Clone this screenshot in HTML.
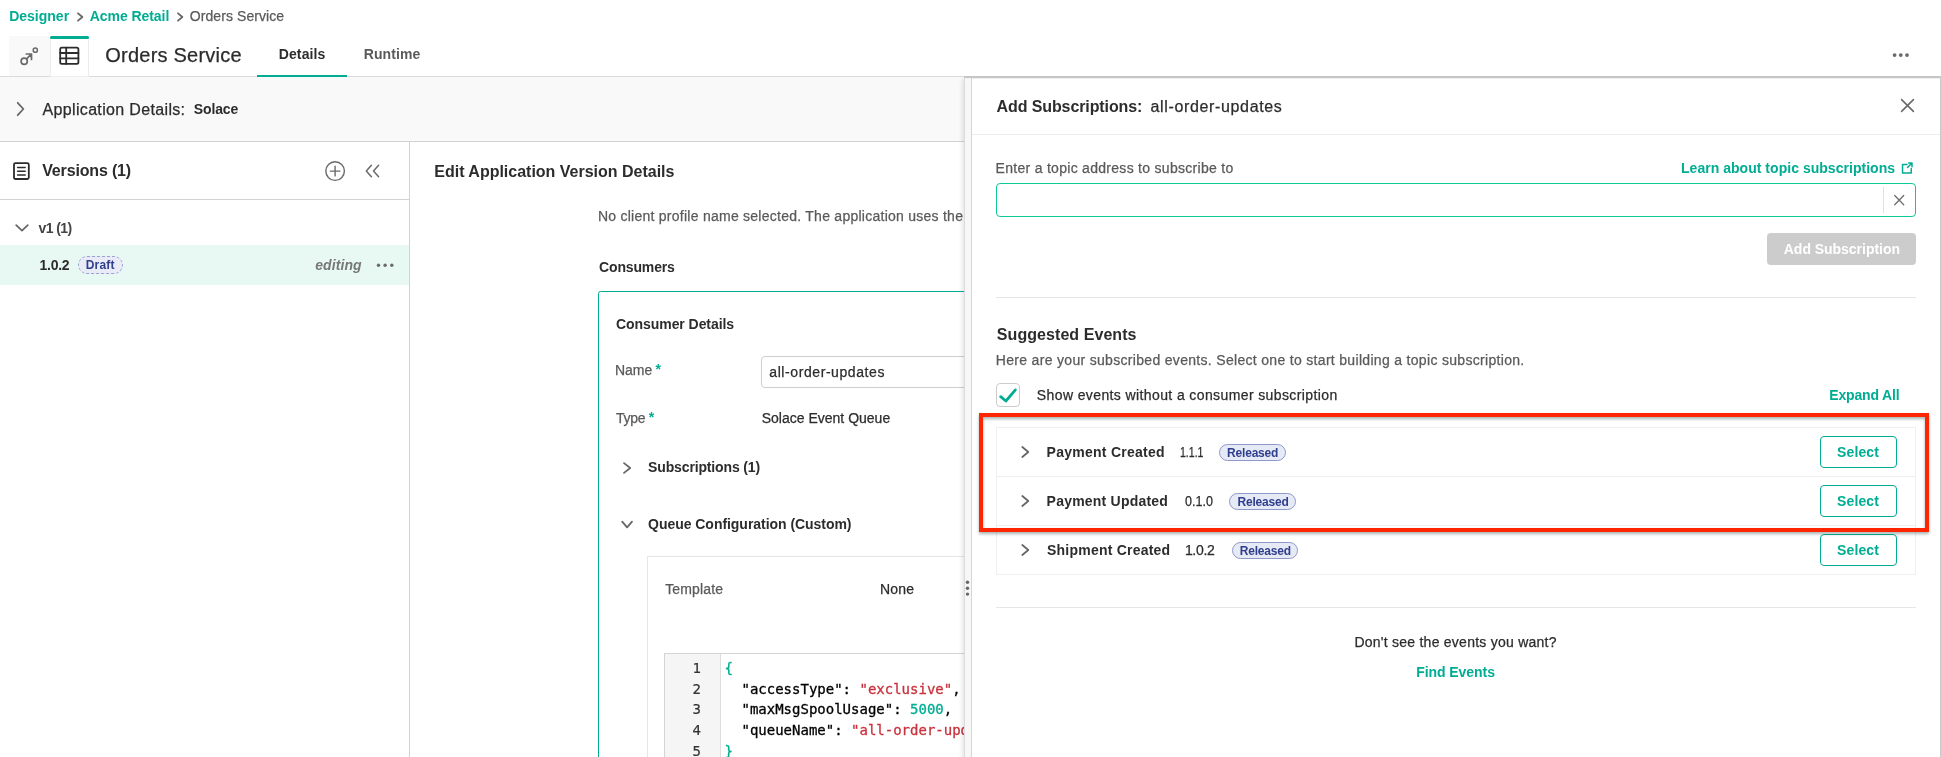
<!DOCTYPE html>
<html lang="en">
<head>
<meta charset="utf-8">
<title>Orders Service - Designer</title>
<style>
html,body{margin:0;padding:0;background:#fff;}
body{width:1941px;height:757px;overflow:hidden;position:relative;font-family:'Liberation Sans',sans-serif;}
#app{position:absolute;left:0;top:0;width:1941px;height:757px;overflow:hidden;background:#fff;will-change:transform;}
.t{position:absolute;line-height:1;white-space:pre;font-family:'Liberation Sans',sans-serif;}
.abs,.box,svg.ic{position:absolute;}
.box{box-sizing:border-box;}
svg.ic{overflow:visible;fill:none;stroke-linecap:round;stroke-linejoin:round;}
nav,header,section,aside,main{position:absolute;left:0;top:0;width:0;height:0;}
main{width:964px;height:757px;overflow:hidden;}
.badge{position:absolute;box-sizing:border-box;border:1px solid #8f99c9;background:#e6e9f6;border-radius:9px;}
.btn-o{position:absolute;box-sizing:border-box;border:1px solid #00ad93;border-radius:4px;background:#fff;}
.code{-webkit-text-stroke:0.3px currentColor;position:absolute;font-family:'DejaVu Sans Mono','Liberation Mono',monospace;font-size:14px;line-height:1;white-space:pre;color:#000;}
.code .s{color:#c9333d;-webkit-text-stroke:0.3px #c9333d;}
.code .n,.code .b{color:#00ad93;-webkit-text-stroke:0.3px #00ad93;}
.ln{-webkit-text-stroke:0.2px currentColor;position:absolute;font-family:'DejaVu Sans Mono','Liberation Mono',monospace;font-size:14px;line-height:1;color:#333;width:30px;text-align:right;}
</style>
</head>
<body>
<div id="app">

<!-- breadcrumb -->
<nav>
  <span class="t" style="left:9.2px;top:9.2px;font-size:14px;color:#00ad93;letter-spacing:0.0px;font-weight:700;">Designer</span>
  <svg class="ic" style="left:76px;top:12px" width="9" height="10" stroke="#666" stroke-width="1.75"><path d="M2 1.3 L6.4 5 L2 8.7"/></svg>
  <span class="t" style="left:89.7px;top:9.2px;font-size:14px;color:#00ad93;letter-spacing:-0.05px;font-weight:700;">Acme Retail</span>
  <svg class="ic" style="left:175.7px;top:12px" width="9" height="10" stroke="#666" stroke-width="1.75"><path d="M2 1.3 L6.4 5 L2 8.7"/></svg>
  <span class="t" style="left:189.7px;top:9.2px;font-size:14px;color:#5a5a5a;letter-spacing:0.085px;-webkit-text-stroke:0.25px currentColor;">Orders Service</span>
</nav>

<!-- page header -->
<header>
  <div class="box" style="left:9px;top:36px;width:41px;height:40px;background:#f9f9f9;"></div>
  <div class="box" style="left:50px;top:36px;width:39px;height:41px;background:#fff;border-left:1px solid #ececec;border-right:1px solid #ececec;"></div>
  <div class="box" style="left:50px;top:35.7px;width:38.5px;height:3px;background:#00ad93;border-radius:1.5px;"></div>
  <!-- graph icon -->
  <svg class="ic" style="left:17px;top:44px" width="24" height="24" stroke="#6a6a6a" stroke-width="1.7">
    <circle cx="7.2" cy="17.3" r="3.1"/><circle cx="18.3" cy="6.2" r="2.1" stroke-width="1.5"/>
    <path d="M9.6 14.9 L14.3 10.2 M9.3 10 L14.5 10 L14.5 15.4"/>
  </svg>
  <!-- table icon -->
  <svg class="ic" style="left:58px;top:44px" width="24" height="24" stroke="#2c2c2c" stroke-width="1.8">
    <rect x="2.2" y="3.6" width="18.2" height="16.2" rx="1.6"/>
    <path d="M8.2 3.6 V19.8 M2.2 9 H20.4 M2.2 14.3 H20.4"/>
  </svg>
  <span class="t" style="left:105.3px;top:45.2px;font-size:20px;color:#2c2c2c;letter-spacing:0.223px;-webkit-text-stroke:0.25px currentColor;">Orders Service</span>
  <span class="t" style="left:278.7px;top:47.2px;font-size:14px;color:#2c2c2c;letter-spacing:0.133px;font-weight:700;">Details</span>
  <span class="t" style="left:363.7px;top:47.2px;font-size:14px;color:#5a5a5a;letter-spacing:0.116px;font-weight:700;">Runtime</span>
  <div class="abs" style="left:0;top:76px;width:1941px;height:1px;background:#dadada;"></div>
  <div class="abs" style="left:50px;top:76px;width:39px;height:1px;background:#eeeeee;"></div>
  <div class="abs" style="left:257px;top:75px;width:90px;height:2px;background:#00ad93;"></div>
  <svg class="ic" style="left:1890px;top:50px" width="22" height="10" fill="#6a6a6a" stroke="none"><circle cx="4.6" cy="5.1" r="1.9" fill="#6a6a6a"/><circle cx="10.8" cy="5.1" r="1.9" fill="#6a6a6a"/><circle cx="17" cy="5.1" r="1.9" fill="#6a6a6a"/></svg>
</header>

<!-- application details bar -->
<section>
  <div class="box" style="left:0;top:77px;width:1941px;height:65px;background:#f9f9f9;border-bottom:1px solid #d2d2d2;"></div>
  <svg class="ic" style="left:14px;top:100px" width="14" height="18" stroke="#666" stroke-width="1.75"><path d="M3.7 2.8 L9.4 9 L3.7 15.2"/></svg>
  <span class="t" style="left:42.5px;top:102.2px;font-size:16px;color:#2c2c2c;letter-spacing:0.342px;-webkit-text-stroke:0.25px currentColor;">Application Details:</span>
  <span class="t" style="left:193.7px;top:102.2px;font-size:14px;color:#2c2c2c;letter-spacing:-0.1px;font-weight:700;">Solace</span>
</section>

<!-- versions sidebar -->
<aside>
  <div class="abs" style="left:409px;top:142px;width:1px;height:615px;background:#d2d2d2;"></div>
  <div class="abs" style="left:0;top:199px;width:409px;height:1px;background:#d2d2d2;"></div>
  <svg class="ic" style="left:11px;top:160px" width="22" height="22" stroke="#2c2c2c" stroke-width="1.8">
    <rect x="3" y="3.2" width="14.8" height="15.8" rx="1.5"/>
    <path d="M6.6 7.6 H14.2 M6.6 11.3 H14.2 M6.6 15 H14.2" stroke-width="1.5"/>
  </svg>
  <span class="t" style="left:42.2px;top:163.2px;font-size:16px;color:#2c2c2c;letter-spacing:-0.155px;font-weight:700;">Versions (1)</span>
  <svg class="ic" style="left:324px;top:160px" width="22" height="22" stroke="#6a6a6a" stroke-width="1.4">
    <circle cx="11.1" cy="11.1" r="9.3"/><path d="M11.1 6.3 V15.9 M6.3 11.1 H15.9"/>
  </svg>
  <svg class="ic" style="left:363px;top:162px" width="20" height="18" stroke="#6a6a6a" stroke-width="1.5">
    <path d="M8.4 3.2 L3.3 9 L8.4 14.8 M15.6 3.2 L10.5 9 L15.6 14.8"/>
  </svg>
  <svg class="ic" style="left:13px;top:221px" width="18" height="14" stroke="#666" stroke-width="1.75"><path d="M3.2 4.2 L9 9.6 L14.8 4.2"/></svg>
  <span class="t" style="left:38.5px;top:221.2px;font-size:14px;color:#444;letter-spacing:-0.6px;font-weight:700;">v1 (1)</span>
  <div class="abs" style="left:0;top:245px;width:409px;height:39.6px;background:#e8f8f3;"></div>
  <span class="t" style="left:39.5px;top:258.2px;font-size:14px;color:#2c2c2c;letter-spacing:-0.275px;font-weight:700;">1.0.2</span>
  <div class="badge" style="left:78px;top:256.3px;width:44.8px;height:17.6px;border:1px dashed #9aa3cf;background:#e9ebf7;"></div>
  <span class="t" style="left:85.7px;top:259.2px;font-size:12px;color:#2f3f8c;letter-spacing:0.225px;font-weight:700;">Draft</span>
  <span class="t" style="left:315.2px;top:258.2px;font-size:14px;color:#787878;letter-spacing:0.083px;font-weight:700;font-style:italic;">editing</span>
  <svg class="ic" style="left:374px;top:261px" width="22" height="9" stroke="none"><circle cx="4.5" cy="4.3" r="1.7" fill="#6a6a6a"/><circle cx="11.1" cy="4.3" r="1.7" fill="#6a6a6a"/><circle cx="17.8" cy="4.3" r="1.7" fill="#6a6a6a"/></svg>
</aside>

<!-- main edit form -->
<main>
  <span class="t" style="left:434.3px;top:164.2px;font-size:16px;color:#2c2c2c;letter-spacing:-0.007px;font-weight:700;">Edit Application Version Details</span>
  <span class="t" style="left:597.9px;top:209.2px;font-size:14px;color:#5a5a5a;letter-spacing:0.256px;-webkit-text-stroke:0.25px currentColor;">No client profile name selected. The application uses the</span>
  <span class="t" style="left:599.0px;top:260.2px;font-size:14px;color:#2c2c2c;letter-spacing:-0.139px;font-weight:700;">Consumers</span>
  <div class="box" style="left:598px;top:291px;width:900px;height:600px;border:1px solid #00ad93;border-radius:2.5px;"></div>
  <span class="t" style="left:616.0px;top:317.2px;font-size:14px;color:#2c2c2c;letter-spacing:-0.06px;font-weight:700;">Consumer Details</span>
  <span class="t" style="left:615.0px;top:363.2px;font-size:14px;color:#5a5a5a;letter-spacing:-0.033px;-webkit-text-stroke:0.25px currentColor;">Name</span>
  <span class="t" style="left:655.6px;top:361.5px;font-size:14px;font-weight:700;color:#00ad93;">*</span>
  <div class="box" style="left:761px;top:356px;width:500px;height:32px;border:1px solid #cfcfcf;border-radius:4px;background:#fff;"></div>
  <span class="t" style="left:769.3px;top:365.2px;font-size:14px;color:#2c2c2c;letter-spacing:0.581px;-webkit-text-stroke:0.25px currentColor;">all-order-updates</span>
  <span class="t" style="left:616.0px;top:411.2px;font-size:14px;color:#5a5a5a;letter-spacing:-0.234px;-webkit-text-stroke:0.25px currentColor;">Type</span>
  <span class="t" style="left:648.8px;top:409.5px;font-size:14px;font-weight:700;color:#00ad93;">*</span>
  <span class="t" style="left:761.7px;top:411.2px;font-size:14px;color:#2c2c2c;letter-spacing:0.005px;-webkit-text-stroke:0.25px currentColor;">Solace Event Queue</span>
  <svg class="ic" style="left:620px;top:460px" width="14" height="16" stroke="#666" stroke-width="1.75"><path d="M4 3.1 L10.2 8 L4 12.9"/></svg>
  <span class="t" style="left:648.1px;top:460.2px;font-size:14px;color:#2c2c2c;letter-spacing:-0.143px;font-weight:700;">Subscriptions (1)</span>
  <svg class="ic" style="left:619px;top:518px" width="16" height="14" stroke="#666" stroke-width="1.75"><path d="M3.2 3.6 L8.1 9.4 L13 3.6"/></svg>
  <span class="t" style="left:648.1px;top:517.2px;font-size:14px;color:#2c2c2c;letter-spacing:-0.041px;font-weight:700;">Queue Configuration (Custom)</span>
  <div class="box" style="left:647px;top:556px;width:700px;height:400px;border:1px solid #e6e6e6;"></div>
  <span class="t" style="left:665.2px;top:582.2px;font-size:14px;color:#5a5a5a;letter-spacing:0.143px;-webkit-text-stroke:0.25px currentColor;">Template</span>
  <span class="t" style="left:880.1px;top:582.2px;font-size:14px;color:#2c2c2c;letter-spacing:0.133px;-webkit-text-stroke:0.25px currentColor;">None</span>
  <div class="box" style="left:664px;top:653px;width:600px;height:300px;border:1px solid #d4d4d4;background:#fff;"></div>
  <div class="box" style="left:665px;top:654px;width:56px;height:300px;background:#f5f5f5;border-right:1px solid #dddddd;"></div>
  <span class="ln" style="top:660.7px;left:671px;">1</span>
  <span class="ln" style="top:681.5px;left:671px;">2</span>
  <span class="ln" style="top:702.2px;left:671px;">3</span>
  <span class="ln" style="top:723px;left:671px;">4</span>
  <span class="ln" style="top:743.7px;left:671px;">5</span>
  <span class="code" style="top:660.7px;left:724.6px;"><span class="b">{</span></span>
  <span class="code" style="top:681.5px;left:724.6px;">  "accessType": <span class="s">"exclusive"</span>,</span>
  <span class="code" style="top:702.2px;left:724.6px;">  "maxMsgSpoolUsage": <span class="n">5000</span>,</span>
  <span class="code" style="top:723px;left:724.6px;">  "queueName": <span class="s">"all-order-updates"</span></span>
  <span class="code" style="top:743.7px;left:724.6px;"><span class="b">}</span></span>
</main>


<!-- add subscriptions side panel -->
<aside>
  <div class="box" style="left:963.6px;top:79px;width:977px;height:690px;background:#fff;box-shadow:-2px 0 4px rgba(0,0,0,0.10);"></div>
  <div class="box" style="left:963.6px;top:77px;width:8.4px;height:690px;background:#f7f7f7;border-left:1px solid #dcdcdc;border-right:1px solid #d6d6d6;"></div>
  <div class="abs" style="left:963.6px;top:76.3px;width:977.4px;height:1.6px;background:#c6c6c6;"></div>
  <div class="abs" style="left:1939.6px;top:77px;width:1.4px;height:690px;background:#c9c9c9;"></div>
  <svg class="ic" style="left:964px;top:578px" width="8" height="20" stroke="none"><circle cx="3.5" cy="4.2" r="1.7" fill="#666"/><circle cx="3.5" cy="10.2" r="1.7" fill="#666"/><circle cx="3.5" cy="16.1" r="1.7" fill="#666"/></svg>
  <span class="t" style="left:996.6px;top:99.2px;font-size:16px;color:#2c2c2c;letter-spacing:-0.105px;font-weight:700;">Add Subscriptions:</span>
  <span class="t" style="left:1150.5px;top:99.2px;font-size:16px;color:#2c2c2c;letter-spacing:0.649px;-webkit-text-stroke:0.25px currentColor;">all-order-updates</span>
  <svg class="ic" style="left:1899px;top:97px" width="17" height="17" stroke="#6a6a6a" stroke-width="1.6"><path d="M2.6 2.6 L14.4 14.4 M14.4 2.6 L2.6 14.4"/></svg>
  <div class="abs" style="left:972px;top:134px;width:968px;height:1px;background:#ececec;"></div>
  <span class="t" style="left:995.6px;top:161.2px;font-size:14px;color:#5a5a5a;letter-spacing:0.288px;-webkit-text-stroke:0.25px currentColor;">Enter a topic address to subscribe to</span>
  <span class="t" style="left:1681.0px;top:161.2px;font-size:14px;color:#00ad93;letter-spacing:0.03px;font-weight:700;">Learn about topic subscriptions</span>
  <svg class="ic" style="left:1899px;top:160px" width="16" height="16" stroke="#00ad93" stroke-width="1.5" stroke-linecap="butt" stroke-linejoin="miter">
    <path d="M8 4.45 H3.55 V13.05 H12.25 V8.4"/><path d="M8.5 7.5 L12.7 3.3 M9.6 3.05 H13 V6.8"/>
  </svg>
  <div class="box" style="left:996px;top:183px;width:920px;height:33.6px;border:1px solid #0cc998;border-radius:4px;background:#fff;"></div>
  <div class="abs" style="left:1883px;top:187px;width:1px;height:26px;background:#e0e0e0;"></div>
  <svg class="ic" style="left:1892px;top:193px" width="14" height="14" stroke="#6e6e6e" stroke-width="1.3"><path d="M2.7 2.5 L11.7 11.7 M11.7 2.5 L2.7 11.7"/></svg>
  <div class="box" style="left:1767.4px;top:233.2px;width:148.6px;height:31.6px;background:#cccccc;border-radius:4px;"></div>
  <span class="t" style="left:1783.8px;top:242.2px;font-size:14px;color:#ffffff;letter-spacing:-0.033px;font-weight:700;">Add Subscription</span>
  <div class="abs" style="left:996px;top:297px;width:920px;height:1px;background:#e6e6e6;"></div>
  <span class="t" style="left:996.8px;top:327.2px;font-size:16px;color:#2c2c2c;letter-spacing:0.067px;font-weight:700;">Suggested Events</span>
  <span class="t" style="left:995.8px;top:353.2px;font-size:14px;color:#5a5a5a;letter-spacing:0.314px;-webkit-text-stroke:0.25px currentColor;">Here are your subscribed events. Select one to start building a topic subscription.</span>
  <div class="box" style="left:996px;top:383px;width:24px;height:24px;border:1px solid #cccccc;border-radius:4px;background:#fff;"></div>
  <svg class="ic" style="left:996px;top:383px" width="24" height="24" stroke="#00ad93" stroke-width="2.7"><path d="M4.6 13.6 L9.9 18 L19.4 6.9"/></svg>
  <span class="t" style="left:1036.8px;top:388.2px;font-size:14px;color:#2c2c2c;letter-spacing:0.39px;-webkit-text-stroke:0.25px currentColor;">Show events without a consumer subscription</span>
  <span class="t" style="left:1829.3px;top:388.2px;font-size:14px;color:#00ad93;letter-spacing:-0.177px;font-weight:700;">Expand All</span>
  <!-- event list -->
  <div class="box" style="left:996px;top:427px;width:920px;height:148px;border:1px solid #efefef;background:#fff;"></div>
  <div class="abs" style="left:997px;top:476px;width:918px;height:1px;background:#efefef;"></div>
  <div class="abs" style="left:997px;top:525px;width:918px;height:1px;background:#efefef;"></div>
  <svg class="ic" style="left:1019px;top:444px" width="14" height="16" stroke="#666" stroke-width="1.75"><path d="M3.3 3 L9.3 8 L3.3 13"/></svg>
  <span class="t" style="left:1046.6px;top:445.2px;font-size:14px;color:#2c2c2c;letter-spacing:0.257px;font-weight:700;">Payment Created</span>
  <span class="t" style="left:1180.15px;top:445.2px;font-size:14px;color:#2c2c2c;letter-spacing:0.0px;-webkit-text-stroke:0.25px currentColor;transform:scaleX(0.7533);transform-origin:0 0;">1.1.1</span>
  <div class="badge" style="left:1219px;top:443.9px;width:66.6px;height:17.6px;"></div>
  <span class="t" style="left:1227.1px;top:447.2px;font-size:12px;color:#2f3f8c;letter-spacing:-0.199px;font-weight:700;">Released</span>
  <div class="btn-o" style="left:1820px;top:436px;width:77px;height:32px;"></div>
  <span class="t" style="left:1837.1px;top:445.2px;font-size:14px;color:#00ad93;letter-spacing:0.12px;font-weight:700;">Select</span>
  <svg class="ic" style="left:1019px;top:493px" width="14" height="16" stroke="#666" stroke-width="1.75"><path d="M3.3 3 L9.3 8 L3.3 13"/></svg>
  <span class="t" style="left:1046.6px;top:494.2px;font-size:14px;color:#2c2c2c;letter-spacing:0.214px;font-weight:700;">Payment Updated</span>
  <span class="t" style="left:1185.2px;top:494.2px;font-size:14px;color:#2c2c2c;letter-spacing:0.0px;-webkit-text-stroke:0.25px currentColor;transform:scaleX(0.8968);transform-origin:0 0;">0.1.0</span>
  <div class="badge" style="left:1229.4px;top:492.9px;width:66.6px;height:17.6px;"></div>
  <span class="t" style="left:1237.5px;top:496.2px;font-size:12px;color:#2f3f8c;letter-spacing:-0.199px;font-weight:700;">Released</span>
  <div class="btn-o" style="left:1820px;top:485px;width:77px;height:32px;"></div>
  <span class="t" style="left:1837.1px;top:494.2px;font-size:14px;color:#00ad93;letter-spacing:0.12px;font-weight:700;">Select</span>
  <svg class="ic" style="left:1019px;top:542px" width="14" height="16" stroke="#666" stroke-width="1.75"><path d="M3.3 3 L9.3 8 L3.3 13"/></svg>
  <span class="t" style="left:1047.0px;top:543.2px;font-size:14px;color:#2c2c2c;letter-spacing:0.221px;font-weight:700;">Shipment Created</span>
  <span class="t" style="left:1184.9px;top:543.2px;font-size:14px;color:#2c2c2c;letter-spacing:-0.325px;-webkit-text-stroke:0.25px currentColor;">1.0.2</span>
  <div class="badge" style="left:1231.6px;top:541.9px;width:66.2px;height:17.6px;"></div>
  <span class="t" style="left:1239.7px;top:545.2px;font-size:12px;color:#2f3f8c;letter-spacing:-0.199px;font-weight:700;">Released</span>
  <div class="btn-o" style="left:1820px;top:534px;width:77px;height:32px;"></div>
  <span class="t" style="left:1837.1px;top:543.2px;font-size:14px;color:#00ad93;letter-spacing:0.12px;font-weight:700;">Select</span>
  <!-- highlight annotation -->
  <div class="box" style="left:979.2px;top:412.7px;width:949.9px;height:119px;border:4.1px solid #ff2500;filter:drop-shadow(0 2px 1.5px rgba(40,60,60,0.4));"></div>
  <div class="abs" style="left:996px;top:607px;width:920px;height:1px;background:#e6e6e6;"></div>
  <span class="t" style="left:1354.4px;top:635.2px;font-size:14px;color:#2c2c2c;letter-spacing:0.248px;-webkit-text-stroke:0.25px currentColor;">Don't see the events you want?</span>
  <span class="t" style="left:1416.2px;top:665.2px;font-size:14px;color:#00ad93;letter-spacing:-0.06px;font-weight:700;">Find Events</span>
</aside>


</div>
</body>
</html>
